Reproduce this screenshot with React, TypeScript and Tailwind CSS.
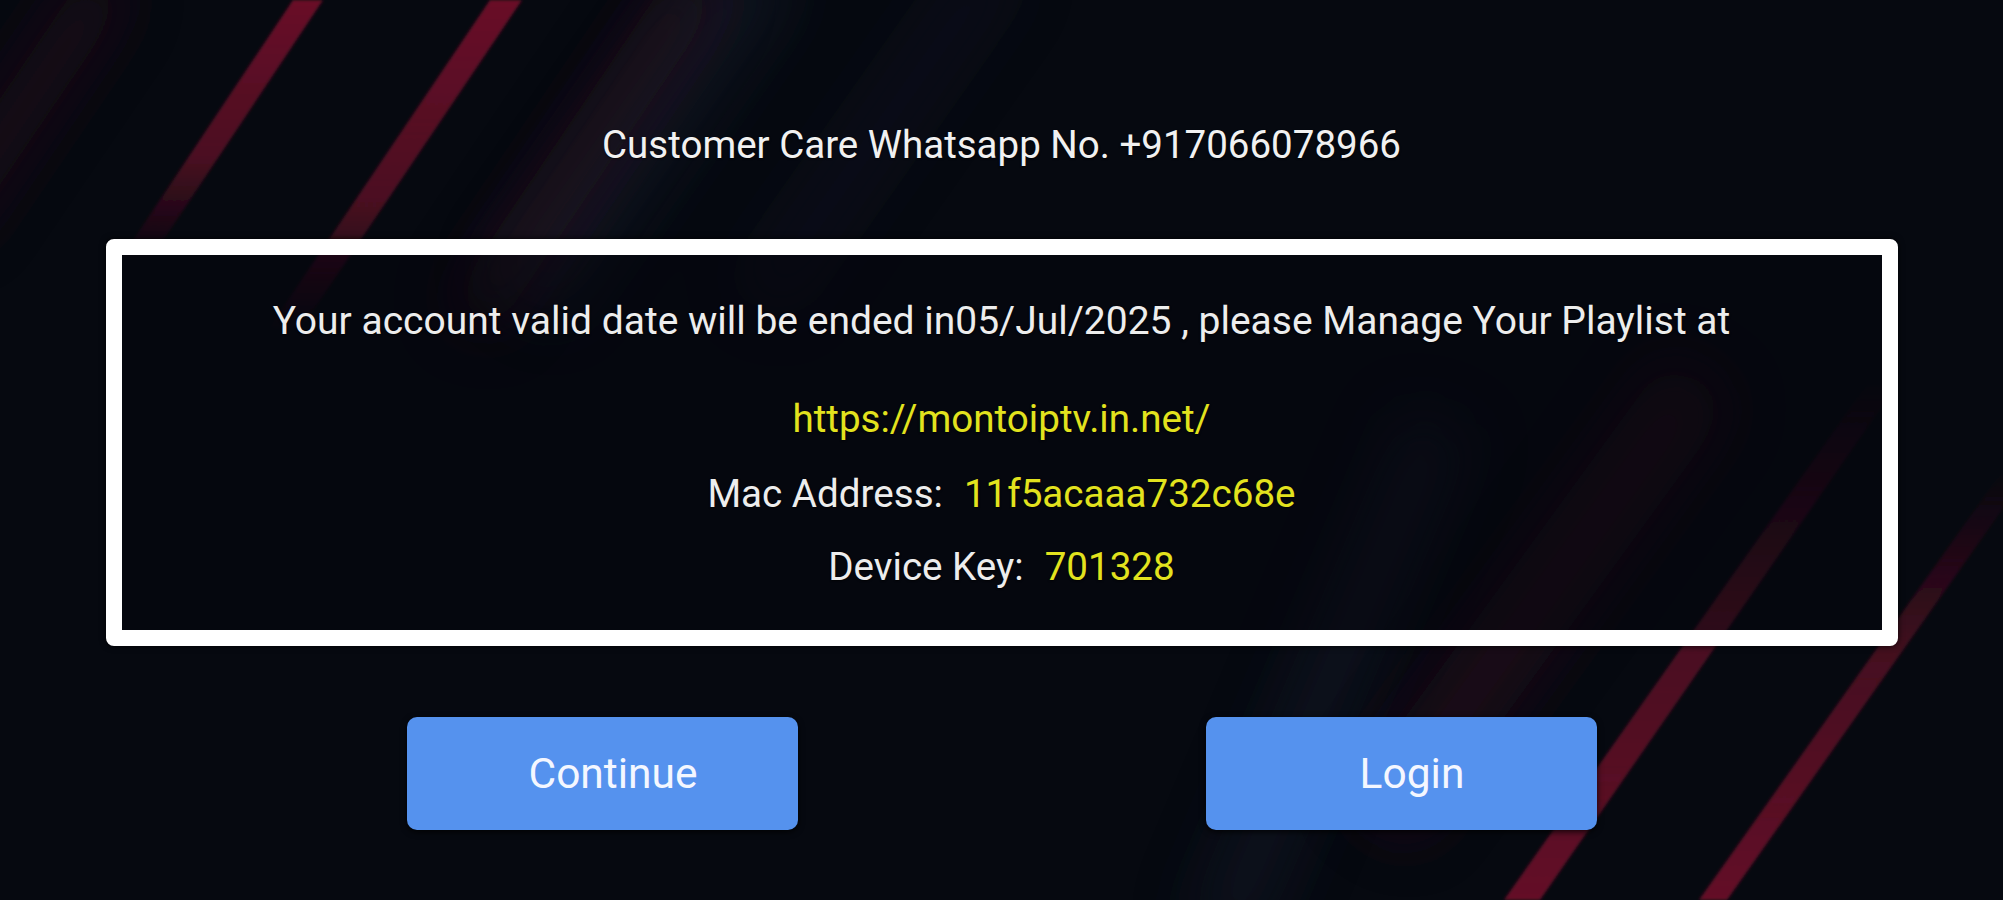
import React from "react";

// diagonal red streaks + soft blue sheen behind the dialog
function Backdrop() {
  return (
    <svg
      className="absolute inset-0 h-full w-full"
      viewBox="0 0 2003 900"
      preserveAspectRatio="none"
      aria-hidden
    >
      <defs>
        <filter id="soft" x="-20%" y="-20%" width="140%" height="140%">
          <feGaussianBlur stdDeviation="1.8" />
        </filter>
        <filter id="haze" x="-50%" y="-50%" width="200%" height="200%">
          <feGaussianBlur stdDeviation="30" />
        </filter>
        <linearGradient id="fadeTop" x1="0" y1="0" x2="0" y2="1">
          <stop offset="0" stopColor="#6e1129" stopOpacity="0.95" />
          <stop offset="0.6" stopColor="#621026" stopOpacity="0.75" />
          <stop offset="1" stopColor="#550d21" stopOpacity="0" />
        </linearGradient>
        <linearGradient id="fadeBottom" x1="0" y1="1" x2="0" y2="0">
          <stop offset="0" stopColor="#6e1129" stopOpacity="0.9" />
          <stop offset="0.55" stopColor="#621026" stopOpacity="0.7" />
          <stop offset="1" stopColor="#550d21" stopOpacity="0" />
        </linearGradient>
      </defs>

      {/* sheen */}
      <g filter="url(#haze)" opacity="0.4">
        <line x1="760" y1="-40" x2="520" y2="300" stroke="#1e2538" strokeWidth="90" />
        <line x1="1000" y1="-40" x2="760" y2="300" stroke="#121828" strokeWidth="60" />
        <line x1="1440" y1="420" x2="1220" y2="940" stroke="#161c2d" strokeWidth="80" />
      </g>

      {/* faint wide red bands */}
      <g filter="url(#haze)" opacity="0.6">
        <line x1="700" y1="-20" x2="470" y2="320" stroke="#2c0d1c" strokeWidth="55" />
        <line x1="110" y1="-20" x2="-60" y2="230" stroke="#2a0c1a" strokeWidth="50" />
        <line x1="1700" y1="380" x2="1380" y2="820" stroke="#2c0c1b" strokeWidth="80" />
      </g>

      {/* top-left streaks */}
      <g filter="url(#soft)">
        <polygon points="293,0 323,0 150,260 120,260" fill="url(#fadeTop)" />
        <polygon points="490,0 522,0 300,330 268,330" fill="url(#fadeTop)" />
      </g>

      {/* bottom-right streaks */}
      <g filter="url(#soft)">
        <polygon points="1870,380 1900,380 1540,900 1504,900" fill="url(#fadeBottom)" />
        <polygon points="2003,470 2030,470 1727,900 1699,900" fill="url(#fadeBottom)" />
      </g>
    </svg>
  );
}

function InfoRow(props: { label: string; value: string }) {
  return (
    <div className="flex items-center justify-center leading-[45px]">
      <span className="text-[#ededed]">{props.label}</span>
      <span className="ml-[21px] text-[#e2e21e]">{props.value}</span>
    </div>
  );
}

export default function App() {
  return (
    <div className="relative h-[900px] w-full overflow-hidden bg-[#060910] font-['Roboto',sans-serif] [text-shadow:0_1px_2px_rgba(0,0,0,0.7)]">
      <Backdrop />

      <div className="relative flex flex-col items-center">
        <p className="mt-[122px] text-[38.5px] leading-[45px] text-[#f1f1f1]">
          Customer Care Whatsapp No. +917066078966
        </p>

        <div className="mt-[72px] h-[407px] w-[1792px] rounded-[8px] border-[16px] border-white bg-[#04060c]/40 shadow-[0_0_6px_rgba(0,0,0,0.8)]">
          <div className="flex flex-col items-center pt-[44px] text-[38.6px]">
            <p className="text-[39px] leading-[45px] text-[#ededed]">
              Your account valid date will be ended in05/Jul/2025 , please Manage Your Playlist at
            </p>
            <p className="mt-[52px] leading-[45px] text-[#e2e21e]">
              https://montoiptv.in.net/
            </p>
            <div className="mt-[30px]">
              <InfoRow label="Mac Address:" value="11f5acaaa732c68e" />
            </div>
            <div className="mt-[28px]">
              <InfoRow label="Device Key:" value="701328" />
            </div>
          </div>
        </div>

        <div className="mt-[71px] flex gap-[408px]">
          <button
            type="button"
            className="flex h-[113px] w-[391px] items-center justify-center rounded-[10px] bg-[#5592ee] pl-[22px] text-[42.5px] text-[#f4f7ff] shadow-[0_2px_6px_rgba(0,0,0,0.8)]"
          >
            Continue
          </button>
          <button
            type="button"
            className="flex h-[113px] w-[391px] items-center justify-center rounded-[10px] bg-[#5592ee] pl-[22px] text-[42.5px] text-[#f4f7ff] shadow-[0_2px_6px_rgba(0,0,0,0.8)]"
          >
            Login
          </button>
        </div>
      </div>
    </div>
  );
}
